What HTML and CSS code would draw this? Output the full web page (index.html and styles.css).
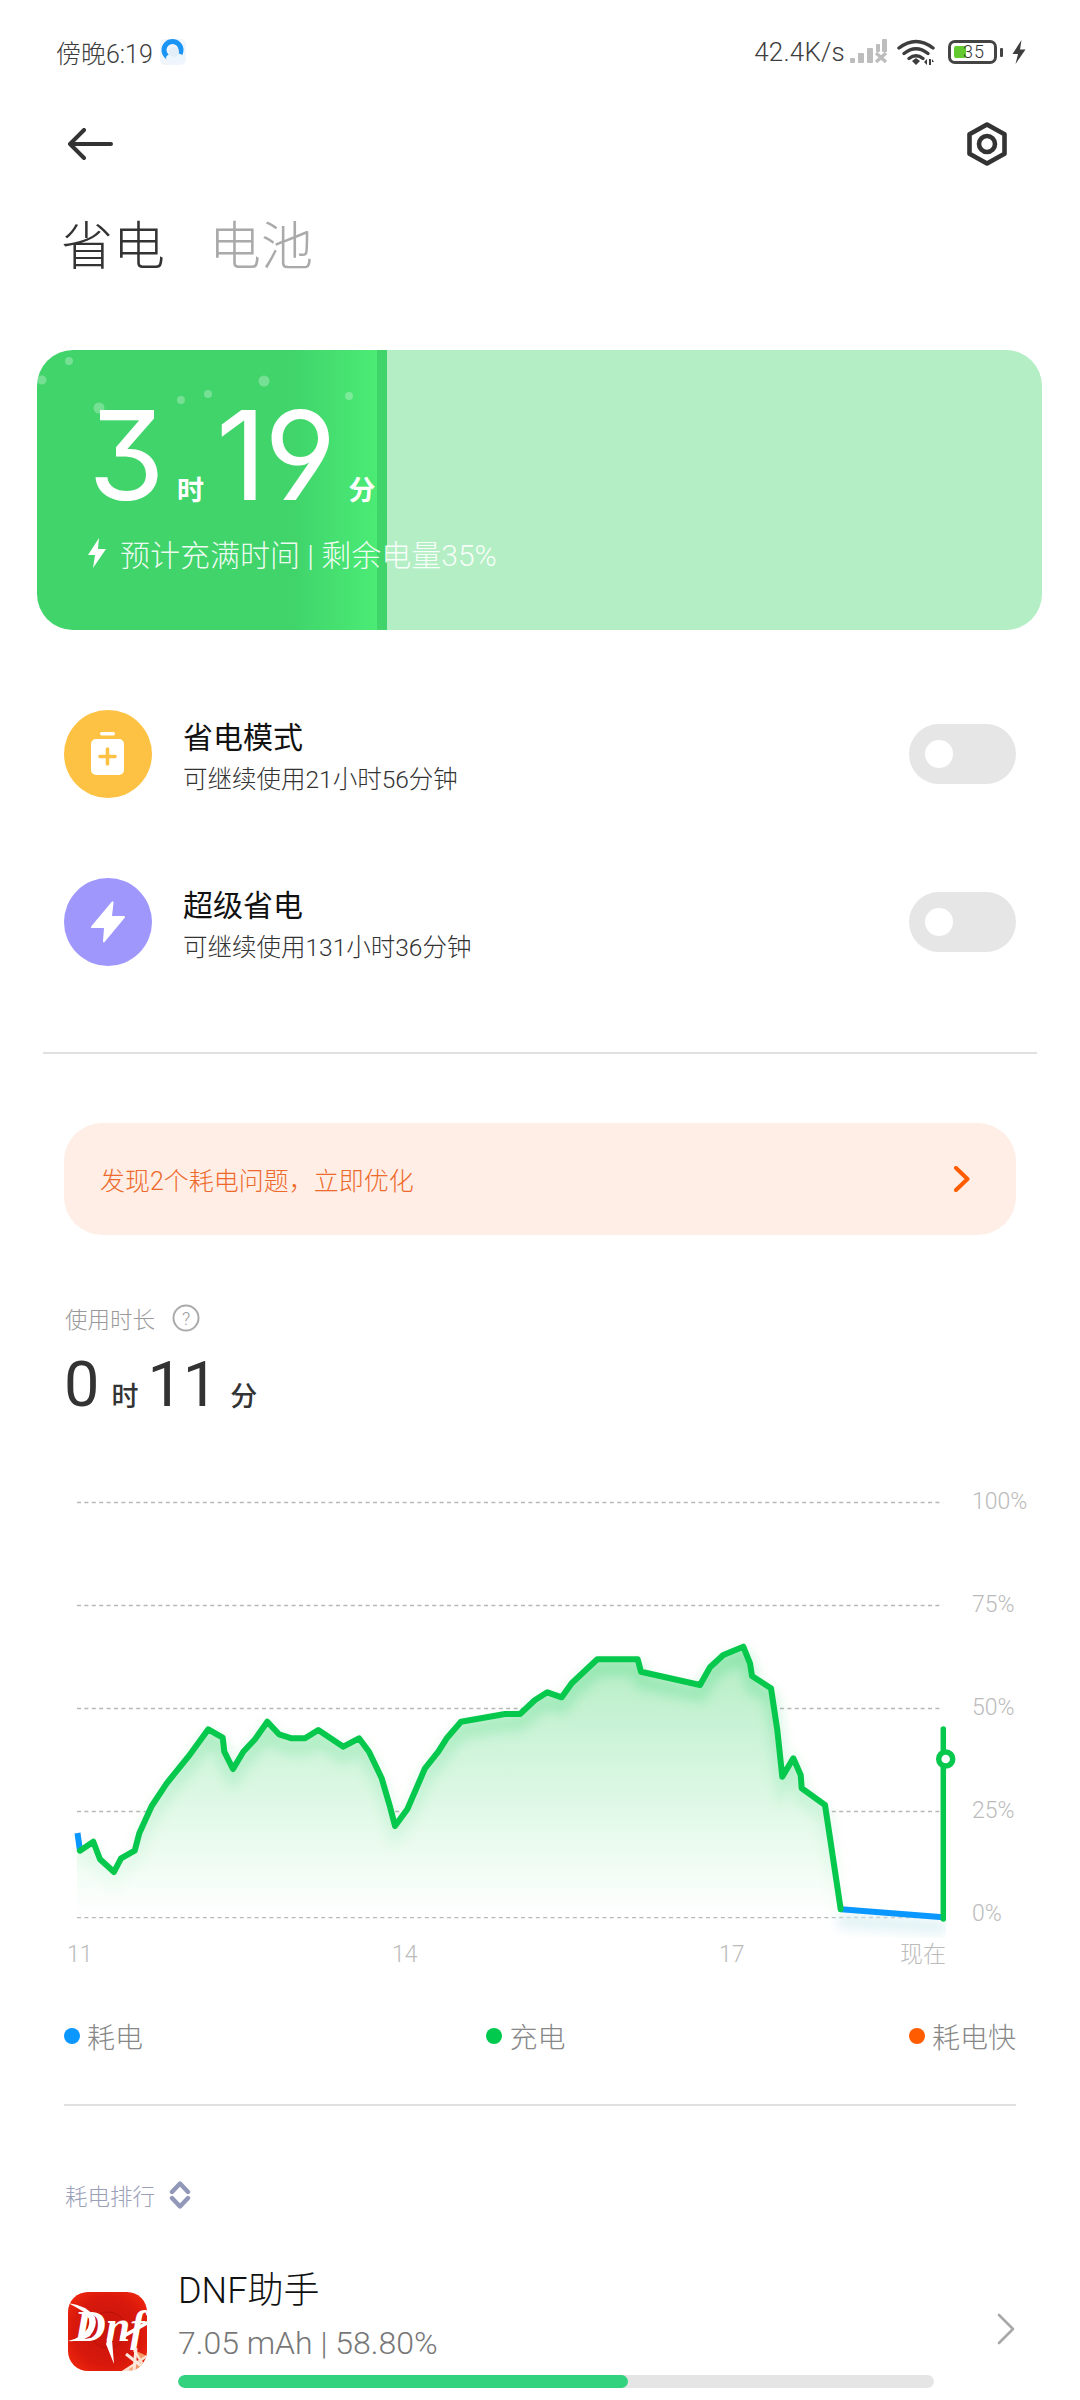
FILE: index.html
```html
<!DOCTYPE html>
<html lang="zh">
<head>
<meta charset="utf-8">
<title>省电</title>
<link rel="stylesheet" href="styles.css">
</head>
<body>
<div class="page">
  <header class="status">
    <div class="status-left">
      <span class="clock">傍晚6:19</span>
      <svg class="qq" width="26" height="26" viewBox="0 0 26 26">
        <rect x="0" y="0" width="26" height="26" rx="5" fill="#f1f6fc"/>
        <circle cx="12.5" cy="11" r="8.5" fill="none" stroke="#1b95f5" stroke-width="5"/>
        <ellipse cx="15" cy="19" rx="9" ry="5" fill="#eef6fd"/>
        <circle cx="14" cy="13" r="5" fill="#e2eef8"/>
      </svg>
    </div>
    <div class="status-right">
      <span class="speed">42.4K/s</span>
      <svg class="sig" width="38" height="26" viewBox="0 0 38 26">
        <g fill="#bdbdbd">
          <rect x="0" y="19" width="5" height="5" rx="1"/>
          <rect x="8" y="14" width="6" height="10" rx="1"/>
          <rect x="17" y="9" width="6" height="15" rx="1"/>
          <rect x="26" y="5" width="4" height="8" rx="1"/>
          <rect x="32" y="0" width="5" height="13" rx="1"/>
        </g>
        <path d="M26 14l10 9M36 14l-10 9" stroke="#bdbdbd" stroke-width="3.4" fill="none"/>
      </svg>
      <svg class="wifi" width="38" height="28" viewBox="0 0 38 28">
        <g fill="none" stroke="#3d3d3d" stroke-width="3.4" stroke-linecap="round">
          <path d="M2 10Q19 -3 36 10"/>
          <path d="M7 15.500Q19 6 31 15.500"/>
          <path d="M12 20.500Q19 15 26 20.500"/>
        </g>
        <path d="M15 23L19 20L23 23L19 27Z" fill="#3d3d3d"/>
        <path d="M27 24l3-3v6zM32 21h2v6h-2zM35 21l2 3h-2z" fill="#3d3d3d"/>
      </svg>
      <div class="batt">
        <div class="batt-body"><span class="batt-fill"></span><span class="batt-num">35</span></div>
        <span class="batt-nub"></span>
      </div>
      <svg class="bolt-s" width="14" height="24" viewBox="0 0 14 24"><path d="M9.500 0L0.500 14H6L3.500 24L13.500 9.500H8Z" fill="#3d3d3d"/></svg>
    </div>
  </header>

  <nav class="nav">
    <svg width="46" height="32" viewBox="0 0 46 32"><path d="M44 16H3M17 2L3 16L17 30" fill="none" stroke="#333" stroke-width="4" stroke-linecap="round" stroke-linejoin="round"/></svg>
    <svg width="42" height="44" viewBox="0 0 42 44"><path d="M21 2.500L38.500 12.300V31.700L21 41.500L3.500 31.700V12.300Z" fill="none" stroke="#333" stroke-width="4.600" stroke-linejoin="round"/><circle cx="21" cy="22" r="8" fill="none" stroke="#333" stroke-width="4.600"/></svg>
  </nav>

  <div class="tabs"><span class="tab on">省电</span><span class="tab">电池</span></div>

  <section class="card">
    <svg class="bubbles" width="360" height="80" viewBox="0 0 360 80">
      <g fill="#fff" fill-opacity=".28">
        <circle cx="32" cy="11" r="4"/><circle cx="5" cy="30" r="4.500"/><circle cx="227" cy="31" r="5.500"/>
        <circle cx="171" cy="44" r="4"/><circle cx="144" cy="50" r="4"/><circle cx="312" cy="46" r="4"/><circle cx="62" cy="58" r="5.500"/>
      </g>
    </svg>
    <div class="eta">
      <span class="big">3</span><span class="unit">时</span><span class="big b2">19</span><span class="unit">分</span>
    </div>
    <div class="eta-sub">
      <svg width="18" height="30" viewBox="0 0 18 30"><path d="M11 0L0 17H7L5 30L18 11H10Z" fill="#fff"/></svg>
      <span>预计充满时间 | 剩余电量35%</span>
    </div>
  </section>

  <section class="modes">
    <div class="mode">
      <span class="ico ico-y">
        <svg width="36" height="44" viewBox="0 0 36 44"><rect x="10" y="0" width="15" height="3.500" rx="1.700" fill="#fff"/><rect x="1" y="7" width="33" height="36" rx="5" fill="#fff"/><path d="M17.500 17v15M10 24.500h15" stroke="#fdc243" stroke-width="3.600" stroke-linecap="round"/></svg>
      </span>
      <div class="mode-text"><div class="mode-t">省电模式</div><div class="mode-s">可继续使用21小时56分钟</div></div>
      <span class="toggle"><i class="knob"></i></span>
    </div>
    <div class="mode">
      <span class="ico ico-p">
        <svg width="36" height="44" viewBox="0 0 36 44"><path d="M22 1.500Q23.500 0.500 23.500 3L22 16H33.500Q36 16 34.500 18L15 41.500Q13 43.500 13 41L14 28H2.500Q0 28 1.500 26Z" fill="#fff"/></svg>
      </span>
      <div class="mode-text"><div class="mode-t">超级省电</div><div class="mode-s">可继续使用131小时36分钟</div></div>
      <span class="toggle"><i class="knob"></i></span>
    </div>
  </section>

  <hr class="rule rule-a">

  <a class="alert"><span>发现2个耗电问题，立即优化</span>
    <svg width="16" height="26" viewBox="0 0 16 26"><path d="M2 2L13.500 13L2 24" fill="none" stroke="#ff5c00" stroke-width="4" stroke-linecap="round" stroke-linejoin="round"/></svg>
  </a>

  <div class="usage-h"><span>使用时长</span>
    <svg width="28" height="28" viewBox="0 0 28 28"><circle cx="14" cy="14" r="12.500" fill="none" stroke="#aaa" stroke-width="2"/><text x="14" y="20.500" class="q">?</text></svg>
  </div>
  <div class="usage"><span class="n">0</span><span class="u">时</span><span class="n n2">11</span><span class="u">分</span></div>

  <svg class="chart" width="1080" height="500" viewBox="0 1480 1080 500">
    <defs>
      <linearGradient id="area" gradientUnits="userSpaceOnUse" x1="0" y1="1650" x2="0" y2="1917">
        <stop offset="0" stop-color="#b4edc5"/><stop offset=".5" stop-color="#d9f7e2"/><stop offset=".85" stop-color="#f4fdf6"/><stop offset="1" stop-color="#fff"/>
      </linearGradient>
      <linearGradient id="gl" gradientUnits="userSpaceOnUse" x1="0" y1="1650" x2="0" y2="1900">
        <stop offset="0" stop-color="#00c94e" stop-opacity=".22"/><stop offset="1" stop-color="#00c94e" stop-opacity=".02"/>
      </linearGradient>
      <filter id="blur" x="-10%" y="-20%" width="120%" height="140%"><feGaussianBlur stdDeviation="6"/></filter>
      <clipPath id="right"><rect x="70" y="1500" width="876" height="440"/></clipPath>
    </defs>
    <g class="grid">
      <path d="M77 1502.500H943M77 1605.500H943M77 1708.500H943M77 1811.500H943M77 1917.500H943"/>
    </g>
    <polygon fill="url(#area)" points="77,1917 77,1833 80,1851 93.300,1842 100,1859.300 114,1872 121,1858.300 134.700,1850.700 139.300,1833.300 151.700,1806 166.700,1783.300 188.300,1756.700 208.300,1729.300 222.700,1737.700 224.300,1751.700 233,1769 243.300,1751.700 255,1739.300 267.300,1721.700 279,1734.300 291.700,1738.300 305,1738.300 318.300,1730 343.300,1746.700 359,1738.300 369,1751.700 381.700,1778.300 390,1806.700 395,1826 407.300,1809.300 425,1768.300 438.300,1751.700 446.700,1738.300 461,1721.700 505,1714 520,1714 535,1700 547.300,1692.300 561.700,1697.300 571.700,1683.300 597.300,1659.300 637.700,1659.300 641,1671.700 700,1685 710,1667.300 723.300,1655 743.300,1646.700 750,1663.300 752,1676 771,1688.300 777.300,1730 782.300,1776.700 793.300,1758.300 800.700,1775 801.700,1788.300 825,1805 829.300,1833.300 840.700,1917"/>
    <g clip-path="url(#right)">
      <polyline class="glow" filter="url(#blur)" points="80,1861 93.300,1852 100,1869 114,1882 121,1868 134.700,1861 139.300,1843 151.700,1816 166.700,1793 188.300,1767 208.300,1739 222.700,1748 224.300,1762 233,1779 243.300,1762 255,1749 267.300,1732 279,1744 291.700,1748 305,1748 318.300,1740 343.300,1757 359,1748 369,1762 381.700,1788 390,1817 395,1836 407.300,1819 425,1778 438.300,1762 446.700,1748 461,1732 505,1724 520,1724 535,1710 547.300,1702 561.700,1707 571.700,1693 597.300,1669 637.700,1669 641,1682 700,1695 710,1677 723.300,1665 743.300,1657 750,1673 752,1686 771,1698 777.300,1740 782.300,1787 793.300,1768 800.700,1785 801.700,1798 825,1815 829.300,1843 840.700,1919"/>
      <polygon class="blue-glow" filter="url(#blur)" points="838,1914 946,1920 946,1934 838,1928"/>
    </g>
    <g class="line-b"><path d="M77.500 1833L80 1851"/><path d="M841 1909.300L943 1917.300"/></g>
    <polyline class="line-g" points="80,1850.700 93.300,1841.700 100,1859.300 114,1872 121,1858.300 134.700,1850.700 139.300,1833.300 151.700,1806 166.700,1783.300 188.300,1756.700 208.300,1729.300 222.700,1737.700 224.300,1751.700 233,1769 243.300,1751.700 255,1739.300 267.300,1721.700 279,1734.300 291.700,1738.300 305,1738.300 318.300,1730 343.300,1746.700 359,1738.300 369,1751.700 381.700,1778.300 390,1806.700 395,1826 407.300,1809.300 425,1768.300 438.300,1751.700 446.700,1738.300 461,1721.700 505,1714 520,1714 535,1700 547.300,1692.300 561.700,1697.300 571.700,1683.300 597.300,1659.300 637.700,1659.300 641,1671.700 700,1685 710,1667.300 723.300,1655 743.300,1646.700 750,1663.300 752,1676 771,1688.300 777.300,1730 782.300,1776.700 793.300,1758.300 800.700,1775 801.700,1788.300 825,1805 829.300,1833.300 840.700,1909.300"/>
    <path class="line-v" d="M943.300 1729V1919"/>
    <circle class="dot" cx="945.700" cy="1759" r="7"/>
    <g class="ax">
      <text x="972" y="1509">100%</text><text x="972" y="1612">75%</text><text x="972" y="1715">50%</text><text x="972" y="1818">25%</text><text x="972" y="1921">0%</text>
      <text x="67" y="1962">11</text><text x="392" y="1962">14</text><text x="719" y="1962">17</text><text x="900" y="1962">现在</text>
    </g>
  </svg>

  <div class="legend">
    <span class="lg"><i class="ld ld-b"></i>耗电</span>
    <span class="lg"><i class="ld ld-g"></i>充电</span>
    <span class="lg"><i class="ld ld-o"></i>耗电快</span>
  </div>

  <hr class="rule rule-b">

  <div class="rank-h"><span>耗电排行</span>
    <svg width="22" height="30" viewBox="0 0 22 30"><path d="M3 12L11 3.500L19 12M3 18L11 26.500L19 18" fill="none" stroke="#9298b8" stroke-width="4.400" stroke-linejoin="round" stroke-linecap="round"/></svg>
  </div>

  <div class="app">
    <svg class="app-ico" width="79" height="79" viewBox="0 0 79 79">
      <defs>
        <radialGradient id="red" cx=".5" cy=".5" r=".7"><stop offset="0" stop-color="#c8140c"/><stop offset=".6" stop-color="#d8180c"/><stop offset="1" stop-color="#f52a0c"/></radialGradient>
        <clipPath id="rr"><rect width="79" height="79" rx="20"/></clipPath>
      </defs>
      <g clip-path="url(#rr)">
        <rect width="79" height="79" fill="url(#red)"/>
        <circle cx="40" cy="38" r="18" fill="none" stroke="#b8120a" stroke-width="1"/>
        <path d="M0 11Q18 13 27 25Q30 34 22 44Q12 50 0 49Q14 46 20 36Q24 26 16 20Q8 15 0 11Z" fill="#fff"/>
        <text x="6" y="49" class="dnf">Dnf</text>
        <path d="M38 52L43 36L46 72ZM52 44L79 29V33L54 47Z" fill="#fff"/>
        <path d="M66 58L79 79H56L79 64" fill="#f59a66" stroke="#fbe0d0" stroke-width="2.500"/>
        <path d="M58 62L76 76M68 56L66 79" stroke="#fbe9dd" stroke-width="3"/>
      </g>
    </svg>
    <div class="app-body">
      <div class="app-name">DNF助手</div>
      <div class="app-meta">7.05 mAh | 58.80%</div>
      <div class="bar"><div class="bar-fill" style="width:59.500%"></div></div>
    </div>
    <svg class="app-go" width="20" height="32" viewBox="0 0 20 32"><path d="M3 2L17 16L3 30" fill="none" stroke="#a8a8a8" stroke-width="2.600" stroke-linecap="round" stroke-linejoin="round"/></svg>
  </div>
</div>
</body>
</html>
```
FILE: styles.css
```css
* { box-sizing: border-box; }
html, body { margin: 0; padding: 0; background: #fff; }
body { font-family: Roboto, "Noto Sans CJK SC", sans-serif; color: #111; }
.page { width: 1080px; height: 2400px; overflow: hidden; }

.status { height: 104px; padding: 0 54px 0 56px; display: flex; align-items: center; justify-content: space-between; }
.status-left, .status-right { display: flex; align-items: center; }
.clock { font-size: 25px; font-weight: 300; color: #3d3d3d; }
.qq { margin-left: 7px; }
.speed { font-size: 26px; font-weight: 300; color: #3d3d3d; letter-spacing: .2px; }
.sig { margin-left: 5px; }
.wifi { margin-left: 9px; }
.batt { margin-left: 13px; display: flex; align-items: center; }
.batt-body { position: relative; width: 49px; height: 24px; border: 3px solid #444; border-radius: 7px; display: flex; align-items: center; }
.batt-fill { position: absolute; left: 3px; top: 3px; bottom: 3px; width: 12px; background: #62c92e; border-radius: 2px; }
.batt-num { position: relative; margin-left: 12px; font-size: 18px; font-weight: 300; color: #333; letter-spacing: 1px; line-height: 1; }
.batt-nub { width: 3px; height: 9px; background: #444; margin-left: 3px; border-radius: 1px; }
.bolt-s { margin-left: 9px; }

.nav { height: 80px; padding: 0 72px 0 67px; display: flex; align-items: center; justify-content: space-between; }

.tabs { height: 128px; padding-left: 61px; display: flex; align-items: center; gap: 44px; font-size: 52px; font-weight: 300; }
.tab { color: #aaa; line-height: 1; }
.tab.on { color: #333; }

.card { position: relative; margin: 38px 38px 0 37px; height: 280px; border-radius: 36px; overflow: hidden; color: #fff; padding: 40px 0 0 51px;
  background: linear-gradient(to right, #40d46b 0, #40d46b 255px, #4beb75 340px, #40d46b 340px, #40d46b 350px, #b3eec4 350px); }
.bubbles { position: absolute; left: 0; top: 0; }
.eta { position: relative; display: flex; align-items: baseline; height: 130px; }
.big { font-family: Inter, Roboto, sans-serif; font-size: 124px; font-weight: 400; line-height: 130px; font-feature-settings: "cv09", "cv04"; letter-spacing: -2px; }
.b2 { margin-left: 12px; }
.unit { font-size: 27px; font-weight: 700; margin-left: 14px; }
.eta-sub { position: relative; display: flex; align-items: center; gap: 14px; margin-top: 13px; font-size: 30px; font-weight: 300; height: 40px; color: rgba(255,255,255,.92); }

.modes { margin-top: 80px; padding: 0 64px; display: flex; flex-direction: column; gap: 80px; }
.mode { display: flex; align-items: center; height: 88px; }
.ico { width: 88px; height: 88px; border-radius: 50%; display: flex; align-items: center; justify-content: center; }
.ico-y { background: #fdc243; }
.ico-p { background: #a097fd; }
.mode-text { margin-left: 31px; flex: 1; align-self: flex-start; padding-top: 8px; }
.mode-t { font-size: 30px; line-height: 40px; color: #111; font-weight: 400; }
.mode-s { font-size: 24.500px; line-height: 44px; color: #333; font-weight: 300; }
.toggle { width: 107px; height: 60px; border-radius: 30px; background: #e6e6e6; display: flex; align-items: center; padding-left: 16px; }
.knob { width: 28px; height: 28px; border-radius: 50%; background: #fff; }

.rule { border: 0; height: 2px; margin: 0; background: #e0e0e0; }
.rule-a { margin: 86px 43px 0; }
.rule-b { margin: 48px 64px 0; }

.alert { display: flex; align-items: center; justify-content: space-between; margin: 69px 64px 0; height: 112px; border-radius: 38px; background: #feeee6; padding: 0 46px 0 36px; color: #ee6a2c; font-size: 25px; font-weight: 300; }

.usage-h { margin-top: 68px; height: 30px; padding-left: 65px; display: flex; align-items: center; gap: 17px; font-size: 22.500px; font-weight: 300; color: #999; }
.q { font-family: Roboto, sans-serif; font-size: 18px; fill: #999; text-anchor: middle; }
.usage { height: 80px; margin-top: 12px; padding-left: 64px; display: flex; align-items: baseline; color: #333; }
.n { font-size: 63px; line-height: 80px; font-weight: 400; }
.n2 { margin-left: 9px; }
.u { font-size: 27px; font-weight: 500; margin-left: 12px; }

.chart { display: block; margin-top: 55px; }
.grid path { fill: none; stroke: #b8b8b8; stroke-width: 1.500; stroke-dasharray: 4 3.400; }
.glow { fill: none; stroke: url(#gl); stroke-width: 14; }
.blue-glow { fill: #d9eef3; opacity: .8; }
.line-g { fill: none; stroke: #06c84d; stroke-width: 6; stroke-linejoin: round; stroke-linecap: round; }
.line-b path { fill: none; stroke: #0a97ff; stroke-width: 6; }
.line-v { fill: none; stroke: #06c84d; stroke-width: 5.500; stroke-linecap: round; }
.dot { fill: #fff; stroke: #06c84d; stroke-width: 5.500; }
.ax text { font-family: Roboto, "Noto Sans CJK SC", sans-serif; font-size: 23px; font-weight: 300; fill: #bbb; }

.legend { margin-top: 36px; height: 40px; padding: 0 64px; display: flex; justify-content: space-between; align-items: center; }
.lg { display: flex; align-items: center; gap: 7px; font-size: 28px; font-weight: 300; color: #888; }
.ld { width: 16px; height: 16px; border-radius: 50%; }
.ld-b { background: #0a97ff; }
.ld-g { background: #00c94e; }
.ld-o { background: #ff5c00; }

.rank-h { margin-top: 74px; height: 30px; padding-left: 65px; display: flex; align-items: center; gap: 14px; font-size: 22.500px; font-weight: 300; color: #9aa0b8; }

.app { margin-top: 59px; padding: 0 64px 0 68px; display: flex; }
.app-ico { flex: none; margin-top: 23px; }
.dnf { font-family: "Liberation Serif", serif; font-style: italic; font-weight: 700; font-size: 44px; fill: #fff; }
.app-body { margin-left: 31px; width: 756px; }
.app-name { font-size: 36px; line-height: 44px; font-weight: 300; color: #111; }
.app-meta { margin-top: 8px; font-size: 32px; line-height: 44px; font-weight: 300; color: #777; }
.bar { margin-top: 10px; height: 13px; border-radius: 7px; background: #e5e5e5; overflow: hidden; }
.bar-fill { height: 100%; background: #32d27f; border-radius: 7px; }
.app-go { margin-left: auto; align-self: center; }
```
